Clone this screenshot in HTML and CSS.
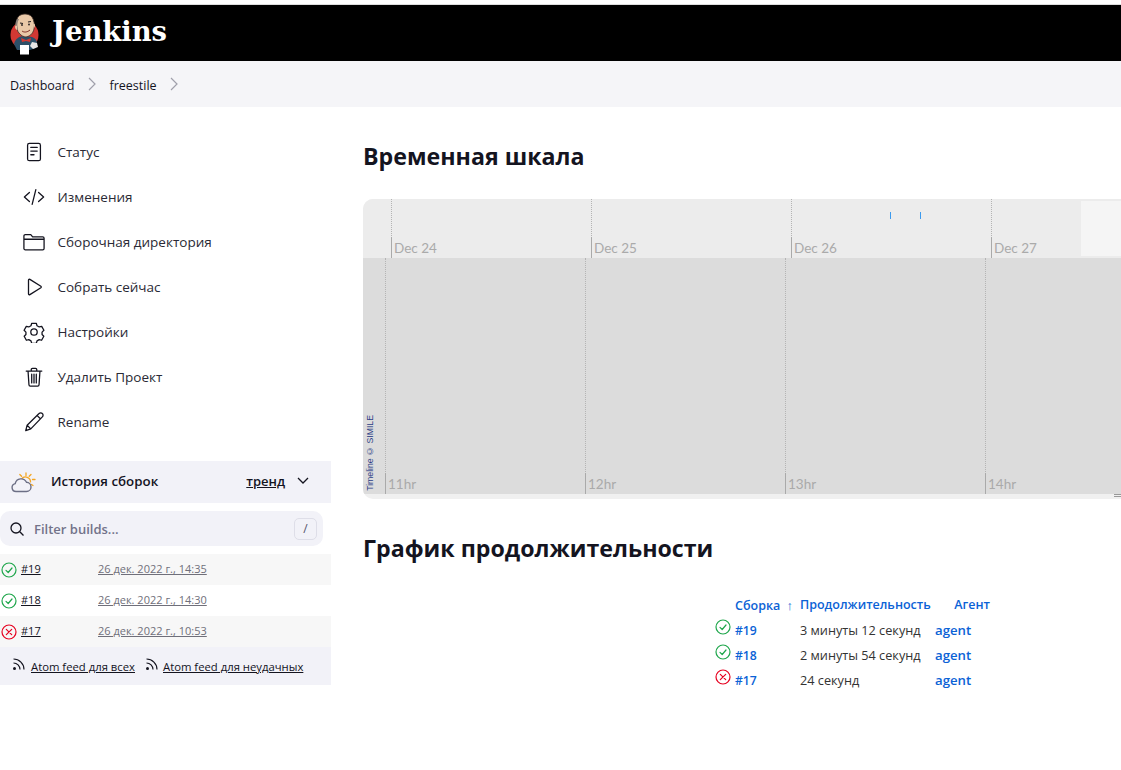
FILE: index.html
```html
<!DOCTYPE html>
<html lang="ru">
<head>
<meta charset="utf-8">
<title>freestile [Jenkins]</title>
<link rel="stylesheet" href="styles.css">
</head>
<body>
<header class="top">
  <svg class="logo" viewBox="0 0 34 44" width="34" height="44" aria-hidden="true">
    <circle cx="16.500" cy="24" r="14" fill="#d33833"/>
    <path d="M6 33c1-5 5-8 10-8l8 1c3 1 5 3 5 6l-1 5-6 2H9z" fill="#2c4f68"/>
    <path d="M10 6c3-4 11-4 14 0 2 3 3 8 2 12-1 5-5 8-9 8-4-1-7-4-8-8C8 13 8 9 10 6z" fill="#e9c9a8" stroke="#3a2b24" stroke-width=".8"/>
    <path d="M9 8c-2 3-2 7-1 10l2 1c-1-4-1-8 1-11z" fill="#8c8078"/>
    <path d="M9 15c-2-2-3 2 0 4zM25 13c2-1 3 2 1 4z" fill="#e8c4a4"/>
    <path d="M12 12l3 .5M20 11l3-.5" stroke="#231f20" stroke-width="1.100"/>
    <circle cx="14" cy="14" r=".9" fill="#231f20"/><circle cx="21" cy="13.500" r=".9" fill="#231f20"/>
    <path d="M14 20c2 1.500 5 1.500 8-1" stroke="#7a2b24" stroke-width="1" fill="none"/>
    <path d="M13 27l5 2 5-2-1 4-4-1-4 1z" fill="#d33833"/>
    <rect x="12" y="34" width="9" height="9.500" fill="#fff"/>
    <path d="M24 31l5 1 1 4-5 2-3-3z" fill="#e6e6e6"/>
  </svg>
  <span class="brand">Jenkins</span>
</header>
<nav class="crumbs">
  <a>Dashboard</a>
  <svg class="chev" viewBox="0 0 10 14" width="10" height="14"><path d="M2 1l6 6-6 6"/></svg>
  <a>freestile</a>
  <svg class="chev" viewBox="0 0 10 14" width="10" height="14"><path d="M2 1l6 6-6 6"/></svg>
</nav>
<div class="page">
  <aside class="side">
    <ul class="tasks">
      <li><svg class="ico" viewBox="0 0 24 24"><rect x="5" y="2.500" width="14" height="19" rx="2"/><path d="M8.500 7h7M8.500 11h7M8.500 15h3.500"/></svg>Статус</li>
      <li><svg class="ico" viewBox="0 0 24 24"><path d="M7 7l-5.500 5L7 17M17 7l5.500 5-5.500 5M14 4l-4 16"/></svg>Изменения</li>
      <li><svg class="ico" viewBox="0 0 24 24"><path d="M1 7V5.500A1.500 1.500 0 0 1 2.500 4h6l2 2.500h11A1.500 1.500 0 0 1 23 8v11a1.500 1.500 0 0 1-1.500 1.500h-19A1.500 1.500 0 0 1 1 19zM1 9h22"/></svg>Сборочная директория</li>
      <li><svg class="ico" viewBox="0 0 24 24"><path d="M6 4.500v15a1 1 0 0 0 1.500.8l12-7.500a1 1 0 0 0 0-1.600l-12-7.500A1 1 0 0 0 6 4.500z"/></svg>Собрать сейчас</li>
      <li><svg class="ico" viewBox="0 0 24 24"><circle cx="12" cy="12" r="3.500"/><path d="M9.500 2.500h5l.8 2.700 2.400 1.300 2.700-.7 2.400 4.300-2 2 0 2.700 1.900 1.900-2.400 4.300-2.600-.7-2.400 1.400-.8 2.600h-5l-.8-2.600-2.400-1.400-2.600.7-2.400-4.300 1.900-1.900 0-2.700-2-2 2.400-4.300 2.700.7 2.400-1.300z" stroke-linejoin="round"/></svg>Настройки</li>
      <li><svg class="ico" viewBox="0 0 24 24"><path d="M3.500 5.500h17M9 5.500V3.800A1.300 1.300 0 0 1 10.300 2.500h3.400A1.300 1.300 0 0 1 15 3.800v1.700M5.500 5.500l1 15a1.500 1.500 0 0 0 1.500 1.500h8a1.500 1.500 0 0 0 1.500-1.500l1-15M9.500 9v9.500M12 9v9.500M14.500 9v9.500"/></svg>Удалить Проект</li>
      <li><svg class="ico" viewBox="0 0 24 24"><path d="M3 21.500l1.500-6L17.500 2.800a2.500 2.500 0 0 1 3.600 0 2.500 2.500 0 0 1 0 3.600L8.500 19.500zM4.500 15.500l4 4M15.500 5l3.500 3.500"/></svg>Rename</li>
    </ul>
    <section class="history">
      <div class="hist-head">
        <svg class="weather" viewBox="0 0 26 24" width="26" height="24">
          <path d="M16 3v2.500M22.500 9.500H25M21 4.500l-1.800 1.800M9.800 4.500l1.800 1.800M21.500 14.500l1.500 1" stroke="#f5a623" stroke-width="1.300" fill="none" stroke-linecap="round"/>
          <path d="M11.500 9a5 5 0 0 1 9 3.500" stroke="#f5a623" stroke-width="1.300" fill="none"/>
          <path d="M6 21.500a4 4 0 0 1-.8-7.900 6 6 0 0 1 11.300-1.300 4.600 4.600 0 0 1 4.500 4.600 4.600 4.600 0 0 1-4.500 4.600z" fill="#f2f2f8" stroke="#6c6f85" stroke-width="1.400"/>
        </svg>
        <span class="hist-title">История сборок</span>
        <a class="trend">тренд</a>
        <svg class="down" viewBox="0 0 14 10" width="14" height="10"><path d="M2 2l5 5 5-5"/></svg>
      </div>
      <div class="filter">
        <svg class="search" viewBox="0 0 16 16" width="16" height="16"><circle cx="7" cy="7" r="5"/><path d="M10.800 10.800L14.500 14.500"/></svg>
        <span class="ph">Filter builds...</span>
        <kbd class="key">/</kbd>
      </div>
      <div class="builds">
        <div class="build odd"><svg class="st ok" viewBox="0 0 16 16"><circle cx="8" cy="8" r="7"/><path d="M5 8.300l2.200 2.200L11 6"/></svg><a class="num">#19</a><a class="when">26 дек. 2022 г., 14:35</a></div>
        <div class="build"><svg class="st ok" viewBox="0 0 16 16"><circle cx="8" cy="8" r="7"/><path d="M5 8.300l2.200 2.200L11 6"/></svg><a class="num">#18</a><a class="when">26 дек. 2022 г., 14:30</a></div>
        <div class="build odd"><svg class="st bad" viewBox="0 0 16 16"><circle cx="8" cy="8" r="7"/><path d="M5.300 5.300l5.400 5.400M10.700 5.300l-5.400 5.400"/></svg><a class="num">#17</a><a class="when">26 дек. 2022 г., 10:53</a></div>
      </div>
      <div class="feeds">
        <svg class="rss" viewBox="0 0 14 14" width="14" height="14"><circle cx="2.500" cy="11.500" r="1.500" fill="#14141f" stroke="none"/><path d="M1.500 6a6.500 6.500 0 0 1 6.500 6.500M1.500 2a10.500 10.500 0 0 1 10.500 10.500"/></svg>
        <a class="feed">Atom feed для всех</a>
        <svg class="rss second" viewBox="0 0 14 14" width="14" height="14"><circle cx="2.500" cy="11.500" r="1.500" fill="#14141f" stroke="none"/><path d="M1.500 6a6.500 6.500 0 0 1 6.500 6.500M1.500 2a10.500 10.500 0 0 1 10.500 10.500"/></svg>
        <a class="feed">Atom feed для неудачных</a>
      </div>
    </section>
  </aside>
  <main class="main">
    <h1 class="title">Временная шкала</h1>
    <div class="timeline">
      <div class="band upper">
        <i class="hl"></i>
        <i class="evt e1"></i><i class="evt e2"></i>
        <div class="tick t1"><span>Dec 24</span></div>
        <div class="tick t2"><span>Dec 25</span></div>
        <div class="tick t3"><span>Dec 26</span></div>
        <div class="tick t4"><span>Dec 27</span></div>
      </div>
      <div class="band lower">
        <div class="tick t1"><span>11hr</span></div>
        <div class="tick t2"><span>12hr</span></div>
        <div class="tick t3"><span>13hr</span></div>
        <div class="tick t4"><span>14hr</span></div>
        <a class="credit">Timeline © SIMILE</a>
      </div>
      <div class="grip"></div>
    </div>
    <h1 class="title second-title">График продолжительности</h1>
    <table class="runs">
      <thead>
        <tr><th class="c-ico"></th><th class="c-num">Сборка <span class="arrow">↑</span></th><th class="c-dur">Продолжительность</th><th class="c-agent">Агент</th></tr>
      </thead>
      <tbody>
        <tr><td><svg class="st ok" viewBox="0 0 16 16"><circle cx="8" cy="8" r="7"/><path d="M5 8.300l2.200 2.200L11 6"/></svg></td><td><a class="lnk num-lnk">#19</a></td><td>3 минуты 12 секунд</td><td><a class="lnk">agent</a></td></tr>
        <tr><td><svg class="st ok" viewBox="0 0 16 16"><circle cx="8" cy="8" r="7"/><path d="M5 8.300l2.200 2.200L11 6"/></svg></td><td><a class="lnk num-lnk">#18</a></td><td>2 минуты 54 секунд</td><td><a class="lnk">agent</a></td></tr>
        <tr><td><svg class="st bad" viewBox="0 0 16 16"><circle cx="8" cy="8" r="7"/><path d="M5.300 5.300l5.400 5.400M10.700 5.300l-5.400 5.400"/></svg></td><td><a class="lnk num-lnk">#17</a></td><td>24 секунд</td><td><a class="lnk">agent</a></td></tr>
      </tbody>
    </table>
  </main>
</div>
</body>
</html>
```
FILE: styles.css
```css
* { box-sizing: border-box; }
html, body { margin: 0; height: 100%; overflow: hidden; }
body {
  padding-top: 4px;
  background: #fff;
  color: #14141f;
  font-family: "Open Sans", "Noto Sans", sans-serif;
  font-size: 13px;
}
.top {
  height: 57px;
  background: #000;
  border-top: 1px solid #ddd;
  display: flex;
  align-items: center;
  padding-left: 8px;
}
.logo { flex: none; }
.brand {
  margin: 0 0 4px 10px;
  color: #fff;
  font-family: "DejaVu Serif", serif;
  font-weight: 700;
  font-size: 27.400px;
}
.crumbs {
  height: 46px;
  background: #f5f5f8;
  display: flex;
  align-items: center;
  padding: 3px 0 0 10px;
}
.crumbs a { font-size: 12.500px; }
.chev { margin: -3px 12.500px 0; fill: none; stroke: #a0a0ab; stroke-width: 1.200; }
.page { display: flex; }
.side { flex: none; width: 331px; padding-top: 22px; }
.tasks { list-style: none; margin: 0; padding: 0 0 0 23px; }
.tasks li { height: 45px; display: flex; align-items: center; font-size: 13.500px; color: #2a2a35; }
.ico {
  flex: none;
  width: 22px; height: 22px; margin-right: 12.500px;
  fill: none; stroke: #14141f; stroke-width: 1.400; stroke-linecap: round; stroke-linejoin: round;
}
.history { margin-top: 17px; }
.hist-head {
  height: 42px;
  background: #f2f2f8;
  display: flex;
  align-items: center;
  padding: 0 0 2px 10px;
}
.weather { flex: none; margin-top: 2px; }
.hist-title { margin-left: 15px; font-weight: 600; font-size: 13.300px; }
.trend { margin-left: auto; font-weight: 600; text-decoration: underline; font-size: 13px; }
.down { margin: 0 21px 0 11px; fill: none; stroke: #14141f; stroke-width: 1.300; }
.filter {
  margin: 8px 8px 8px 0;
  height: 35px;
  background: #f2f2f8;
  border-radius: 10px;
  display: flex;
  align-items: center;
  padding: 0 6px 0 9px;
}
.search { fill: none; stroke: #14141f; stroke-width: 1.300; }
.ph { margin-left: 9px; color: #73738a; font-weight: 600; font-size: 13px; }
.key {
  margin-left: auto;
  width: 23px; height: 22px;
  border: 1px solid #dedee8;
  border-radius: 5px;
  display: flex; align-items: center; justify-content: center;
  font: 12px "Open Sans", sans-serif;
  color: #55556a;
}
.build { height: 31px; display: flex; align-items: center; padding: 0 0 2px 1px; font-size: 11px; }
.build .st { margin-top: 2px; }
.build.odd { background: #f7f7f7; }
.st { width: 16px; height: 16px; flex: none; fill: none; stroke-width: 1.200; stroke-linecap: round; stroke-linejoin: round; }
.st.ok { stroke: #1ea64b; }
.st.bad { stroke: #e6001f; }
.num { margin-left: 4px; width: 77px; text-decoration: underline; }
.when { color: #6f6f7a; text-decoration: underline; }
.feeds {
  height: 38px;
  background: #f2f2f8;
  display: flex;
  align-items: center;
  padding-left: 12px;
  font-size: 11.300px;
}
.rss { flex: none; fill: none; stroke: #14141f; stroke-width: 1.200; margin: -5px 5px 0 0; }
.rss.second { margin-left: 10px; margin-right: 4px; }
.feed { text-decoration: underline; }
.main { flex: 1 1 0; min-width: 0; overflow: hidden; padding-left: 32px; height: 670px; }
.title {
  margin: 33px 0 0;
  height: 33px;
  line-height: 33px;
  font-size: 23.200px;
  font-weight: 700;
  color: #14141f;
  font-family: "Open Sans", sans-serif;
}
.second-title { margin-top: 33px; }
.timeline {
  position: relative;
  margin-top: 26px;
  width: 1510px;
  height: 300px;
  background: #f0f0f0;
  border-radius: 10px;
  overflow: hidden;
  font-family: "Lato", "Open Sans", sans-serif;
}
.band { position: relative; overflow: hidden; }
.upper { height: 59px; background: #ececec; }
.lower { height: 236px; background: #dcdcdc; }
.hl { position: absolute; left: 718px; top: 2px; width: 400px; height: 55px; background: #f5f5f5; }
.evt { position: absolute; top: 13px; width: 1px; height: 7px; background: #3b9aee; }
.e1 { left: 527px; }
.e2 { left: 557px; }
.tick { position: absolute; top: 0; bottom: 0; border-left: 1px dotted #b4b4b4; }
.upper .t1 { left: 28px; } .upper .t2 { left: 228px; } .upper .t3 { left: 428px; } .upper .t4 { left: 628px; }
.lower .t1 { left: 22px; } .lower .t2 { left: 222px; } .lower .t3 { left: 422px; } .lower .t4 { left: 622px; }
.tick span {
  position: absolute;
  left: -1px;
  bottom: 0;
  height: 21px;
  line-height: 23px;
  border-left: 1px solid #aaa;
  padding-left: 2px;
  color: #aaa;
  font-size: 13.500px;
  white-space: nowrap;
}
.credit {
  position: absolute;
  left: 2px;
  bottom: 3px;
  writing-mode: vertical-rl;
  transform: rotate(180deg);
  font: 8.700px/11px "Liberation Sans", sans-serif;
  color: #2c3f86;
  white-space: nowrap;
}
.grip {
  position: absolute;
  left: 751px;
  bottom: 2px;
  width: 8px;
  height: 3px;
  border-top: 1px solid #999;
  border-bottom: 1px solid #999;
}
.runs { margin: 27px 0 0 352px; border-collapse: collapse; table-layout: fixed; width: 275px; font-size: 12.700px; color: #333; }
.runs th { height: 25px; padding: 0; color: #0b62d6; text-align: left; white-space: nowrap; font-weight: 600; font-size: 12.500px; }
.runs td { height: 25px; padding: 0; white-space: nowrap; }
.c-ico { width: 20px; }
.c-num { width: 65px; }
.c-dur { width: 135px; }
.c-agent { width: 55px; text-align: right !important; }
.arrow { margin-left: 3px; font-size: 13px; }
.lnk { color: #0b62d6; font-weight: 600; font-size: 13.200px; }
.num-lnk { font-size: 12.200px; }
.runs td .st { display: block; margin-top: -5px; }
```
